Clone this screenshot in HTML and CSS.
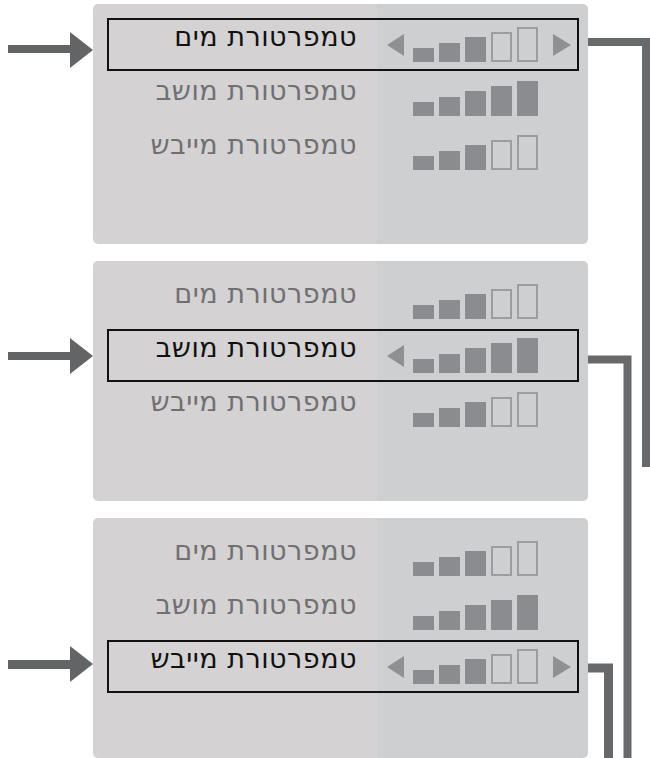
FILE: index.html
```html
<!DOCTYPE html>
<html lang="he">
<head>
  <meta charset="UTF-8">
  <title>תפריט טמפרטורה</title>
  <link rel="stylesheet" href="styles.css">
</head>
<body>

<div class="page">

  <div class="screen">
    <svg class="pointer at-1" width="93" height="36" viewBox="0 0 93 36"><rect x="8" y="13" width="64" height="8"/><polygon points="70,0 93,18 70,36"/></svg>
    <div class="panel">
      <div class="row selected">
        <span class="label">טמפרטורת מים</span>
        <div class="control">
          <span class="tri left"></span>
          <div class="bars"><i class="b1"></i><i class="b2"></i><i class="b3"></i><i class="b4 off"></i><i class="b5 off"></i></div>
          <span class="tri right"></span>
        </div>
      </div>
      <div class="row">
        <span class="label">טמפרטורת מושב</span>
        <div class="control">
          <span class="tri left"></span>
          <div class="bars"><i class="b1"></i><i class="b2"></i><i class="b3"></i><i class="b4"></i><i class="b5"></i></div>
          <span class="tri right"></span>
        </div>
      </div>
      <div class="row">
        <span class="label">טמפרטורת מייבש</span>
        <div class="control">
          <span class="tri left"></span>
          <div class="bars"><i class="b1"></i><i class="b2"></i><i class="b3"></i><i class="b4 off"></i><i class="b5 off"></i></div>
          <span class="tri right"></span>
        </div>
      </div>
    </div>
  </div>

  <div class="screen">
    <svg class="pointer at-2" width="93" height="36" viewBox="0 0 93 36"><rect x="8" y="14" width="64" height="8"/><polygon points="70,0 93,18 70,36"/></svg>
    <div class="panel">
      <div class="row">
        <span class="label">טמפרטורת מים</span>
        <div class="control">
          <span class="tri left"></span>
          <div class="bars"><i class="b1"></i><i class="b2"></i><i class="b3"></i><i class="b4 off"></i><i class="b5 off"></i></div>
          <span class="tri right"></span>
        </div>
      </div>
      <div class="row selected">
        <span class="label">טמפרטורת מושב</span>
        <div class="control">
          <span class="tri left"></span>
          <div class="bars"><i class="b1"></i><i class="b2"></i><i class="b3"></i><i class="b4"></i><i class="b5"></i></div>
          <span class="tri right max"></span>
        </div>
      </div>
      <div class="row">
        <span class="label">טמפרטורת מייבש</span>
        <div class="control">
          <span class="tri left"></span>
          <div class="bars"><i class="b1"></i><i class="b2"></i><i class="b3"></i><i class="b4 off"></i><i class="b5 off"></i></div>
          <span class="tri right"></span>
        </div>
      </div>
    </div>
  </div>

  <div class="screen">
    <svg class="pointer at-3" width="93" height="36" viewBox="0 0 93 36"><rect x="8" y="14" width="64" height="9"/><polygon points="70,0 93,18 70,36"/></svg>
    <div class="panel">
      <div class="row">
        <span class="label">טמפרטורת מים</span>
        <div class="control">
          <span class="tri left"></span>
          <div class="bars"><i class="b1"></i><i class="b2"></i><i class="b3"></i><i class="b4 off"></i><i class="b5 off"></i></div>
          <span class="tri right"></span>
        </div>
      </div>
      <div class="row">
        <span class="label">טמפרטורת מושב</span>
        <div class="control">
          <span class="tri left"></span>
          <div class="bars"><i class="b1"></i><i class="b2"></i><i class="b3"></i><i class="b4"></i><i class="b5"></i></div>
          <span class="tri right"></span>
        </div>
      </div>
      <div class="row selected">
        <span class="label">טמפרטורת מייבש</span>
        <div class="control">
          <span class="tri left"></span>
          <div class="bars"><i class="b1"></i><i class="b2"></i><i class="b3"></i><i class="b4 off"></i><i class="b5 off"></i></div>
          <span class="tri right"></span>
        </div>
      </div>
    </div>
  </div>

  <!-- connector lines from each selected row -->
  <svg class="wires" width="650" height="758" viewBox="0 0 650 758">
    <path d="M588 42 H646 V467"/>
    <path d="M588 359.5 H627.5 V758"/>
    <path d="M588 668 H608.5 V758" style="stroke-width:9"/>
  </svg>

</div>

</body>
</html>
```

FILE: styles.css
```css
html, body {
  margin: 0;
  background: #fff;
  overflow: hidden;
}
body {
  font-family: 'DejaVu Sans', sans-serif;
}
.page {
  position: relative;
  width: 650px;
  height: 758px;
  padding-top: 4px;
  box-sizing: border-box;
  display: flex;
  flex-direction: column;
  gap: 17px;
}
.screen {
  display: flex;
  align-items: flex-start;
}
.pointer {
  flex: none;
  fill: #636466;
}
.pointer.at-1 { margin-top: 28px; }
.pointer.at-2 { margin-top: 77px; }
.pointer.at-3 { margin-top: 128px; }
.panel {
  width: 495px;
  height: 240px;
  box-sizing: border-box;
  padding: 14px 9px 0 14px;
  border-radius: 5px;
  background: linear-gradient(to right, #d4d2d3 0, #d4d2d3 284px, #cecfd1 284px);
  display: flex;
  flex-direction: column;
  gap: 1px;
}
.row {
  height: 53px;
  box-sizing: border-box;
  border: 2px solid transparent;
  display: grid;
  grid-template-columns: 268px 1fr;
}
.row.selected {
  border-color: #111;
}
.label {
  direction: rtl;
  text-align: right;
  padding: 5px 20px 0 0;
  font-size: 27px;
  line-height: 24px;
  letter-spacing: 0.5px;
  color: #707072;
  white-space: nowrap;
}
.selected .label {
  color: #111;
}
.control {
  display: flex;
  align-items: flex-end;
  padding: 0 0 7px 10px;
}
.tri {
  width: 0;
  height: 0;
  border-top: 11px solid transparent;
  border-bottom: 11px solid transparent;
  margin-bottom: 6px;
  visibility: hidden;
}
.tri.left {
  border-right: 17px solid #8f9092;
}
.tri.right {
  border-left: 18px solid #8f9092;
  margin-left: 15px;
}
.selected .tri {
  visibility: visible;
}
.selected .tri.max {
  visibility: hidden;
}
.bars {
  display: flex;
  align-items: flex-end;
  gap: 5px;
  margin-left: 9px;
}
.bars i {
  display: block;
  width: 21px;
  box-sizing: border-box;
  background: #8b8c8f;
}
.bars i.off {
  background: transparent;
  border: 2px solid #9c9d9f;
}
.b1 { height: 14px; }
.b2 { height: 19px; }
.b3 { height: 25px; }
.b4 { height: 30px; }
.b5 { height: 35px; }
.wires {
  position: absolute;
  left: 0;
  top: 0;
  fill: none;
  stroke: #68696b;
  stroke-width: 8;
}
```
